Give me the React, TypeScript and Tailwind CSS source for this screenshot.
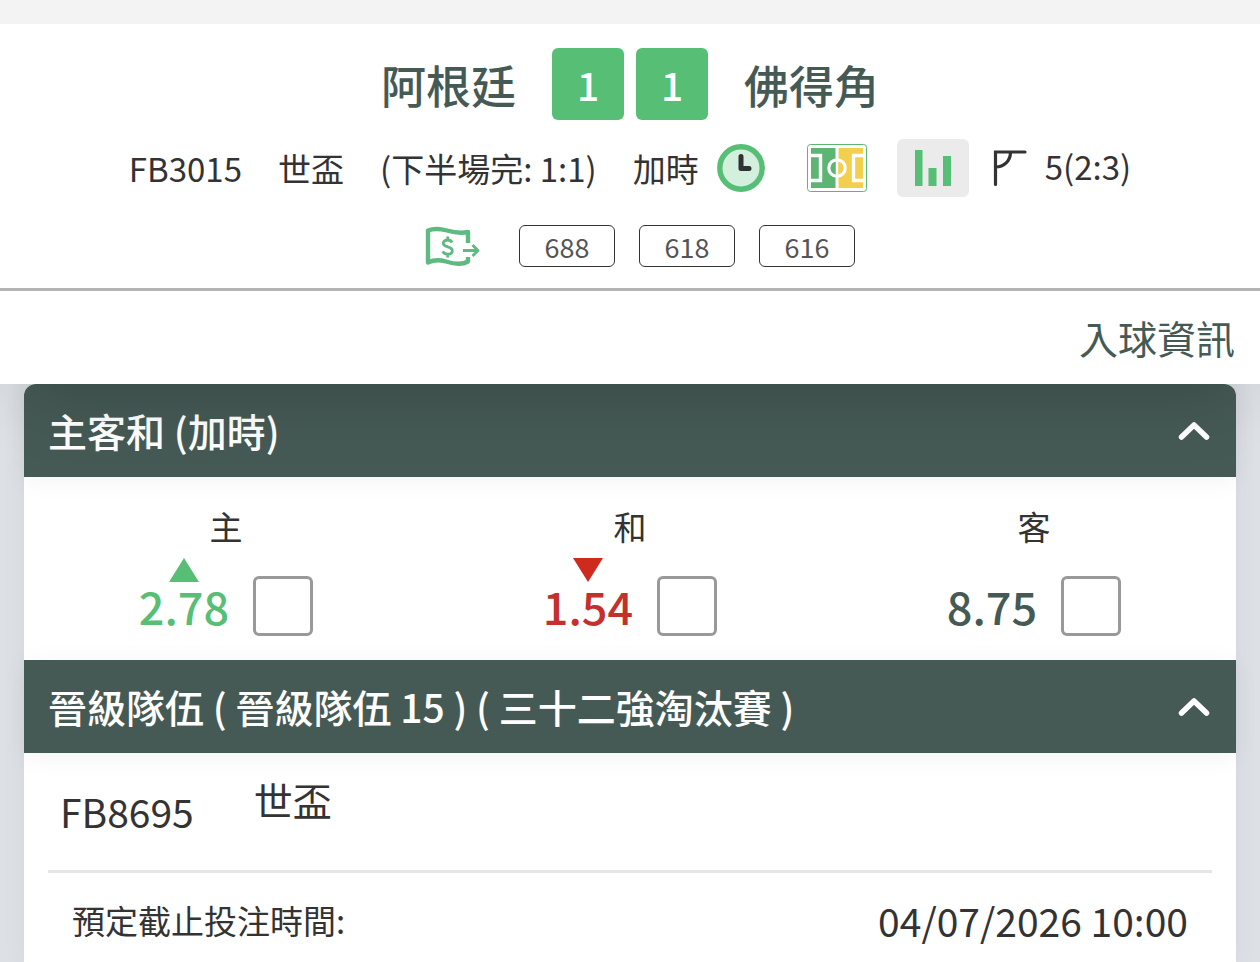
import React, { useState } from 'react';

type Trend = 'up' | 'down' | null;

interface Selection {
  id: string;
  label: string;
  odds: string;
  trend: Trend;
}

const selections: Selection[] = [
  { id: 'home', label: '主', odds: '2.78', trend: 'up' },
  { id: 'draw', label: '和', odds: '1.54', trend: 'down' },
  { id: 'away', label: '客', odds: '8.75', trend: null },
];

const channels = ['688', '618', '616'];

function ClockIcon() {
  return (
    <svg viewBox="0 0 48 48" className="w-12 h-12 shrink-0" aria-hidden="true">
      <circle cx="24" cy="24" r="21.2" fill="#d3efdd" stroke="#57be75" strokeWidth="5.4" />
      <path d="M24 12.5V24.5H32" fill="none" stroke="#2f3432" strokeWidth="5" strokeLinecap="round" strokeLinejoin="round" />
    </svg>
  );
}

function PitchIcon() {
  return (
    <svg viewBox="0 0 60 48" className="w-[60px] h-12" aria-hidden="true">
      <rect x="0.5" y="0.5" width="59" height="47" rx="3" fill="#fff" stroke="#5cb573" />
      <rect x="4" y="4" width="24.5" height="40" fill="#5cb573" />
      <rect x="31.5" y="4" width="24.5" height="40" fill="#f2cf4c" />
      <path d="M4 11.500H13.500V36.500H4M56 11.500H46.500V36.500H56" fill="none" stroke="#fff" strokeWidth="3.4" />
      <path d="M28.500 16.500A8 8 0 0 0 28.500 31.500Z" fill="#5cb573" />
      <path d="M31.500 16.500A8 8 0 0 1 31.500 31.500Z" fill="#f2cf4c" />
      <circle cx="30" cy="24" r="8.2" fill="none" stroke="#fff" strokeWidth="3.2" />
    </svg>
  );
}

function StatsIcon() {
  return (
    <svg viewBox="0 0 36 36" className="w-9 h-9" aria-hidden="true">
      <path d="M0 0H7.500V36H0ZM13.500 18H21.500V36H13.500ZM28 6H36V36H28Z" fill="#57be75" />
    </svg>
  );
}

function CornerIcon() {
  return (
    <svg viewBox="0 0 34 38" className="w-[34px] h-[38px] shrink-0" aria-hidden="true">
      <path d="M2.500 35.500V3H32M2.500 18C11 18 17.500 12 17.500 3" fill="none" stroke="#333" strokeWidth="3.200" strokeLinecap="round" />
    </svg>
  );
}

function CashOutIcon() {
  return (
    <svg viewBox="0 0 56 40" className="w-14 h-10" aria-hidden="true">
      <g fill="none" stroke="#5fb983" strokeLinecap="butt" strokeLinejoin="round">
        <path
          d="M43 17V6C36 7.500 29 6.500 22 4.500C14 2.400 8 2.500 3 4.500V36.500C8 34 14 33.500 21 35.500C29 38 38 38.500 43 35.500V31"
          strokeWidth="4.400"
        />
        <path d="M38 24.500H53M47.500 19L53 24.500L47.500 30" strokeWidth="2.800" />
        <path
          d="M27 16.500C26 14.500 24.500 14 22.700 14C20.100 14 18.300 15.400 18.300 17.300C18.300 19.500 20.300 20.200 22.700 20.900C25.300 21.600 27.300 22.500 27.300 24.800C27.300 26.800 25.500 28.200 22.800 28.200C20.400 28.200 18.600 27.300 17.700 25.400M22.700 10.500V14M22.700 28.200V31.500"
          strokeWidth="2.800"
        />
      </g>
    </svg>
  );
}

function TrendMarker({ trend }: { trend: Trend }) {
  if (!trend) return null;
  return (
    <svg viewBox="0 0 30 24" className="absolute left-1/2 -top-[18px] -translate-x-1/2 w-[30px] h-6" aria-hidden="true">
      {trend === 'up' ? <path d="M15 0L30 24H0Z" fill="#57be75" /> : <path d="M0 0H30L15 24Z" fill="#cf2a1e" />}
    </svg>
  );
}

function SectionHeader({ title, open, onToggle, className = '' }: { title: string; open: boolean; onToggle: () => void; className?: string }) {
  return (
    <h2 className={className}>
      <button
        type="button"
        aria-expanded={open}
        onClick={onToggle}
        className="relative w-full h-[93px] pl-6 pr-[26px] flex items-center justify-between bg-[#465a55] text-white text-[39px] leading-[48px] font-medium text-left rounded-[inherit] shadow-[0_4px_24px_rgba(0,0,0,0.05)]"
      >
        <span className="pb-0.5">{title}</span>
        <svg viewBox="0 0 32 20" className={open ? 'w-8 h-5' : 'w-8 h-5 rotate-180'} aria-hidden="true">
          <path d="M3.500 16L16 4L28.500 16" fill="none" stroke="#fff" strokeWidth="5.500" strokeLinecap="round" strokeLinejoin="round" />
        </svg>
      </button>
    </h2>
  );
}

function MatchHeader() {
  return (
    <header className="relative z-10 bg-white border-t-24 border-[#f3f3f3] shadow-[0_36px_64px_-24px_rgba(0,0,0,0.18)]">
      <div className="pt-6 pb-[21px] border-b-3 border-[#b4b4b4]">
        <div className="flex items-center justify-center gap-9 text-[45px] leading-[60px] font-medium text-[#465a55]">
          <span className="pt-0.5">阿根廷</span>
          <div className="flex gap-3 text-[39px] text-white">
            <span className="w-[72px] h-[72px] rounded-md bg-[#57be75] flex items-center justify-center">1</span>
            <span className="w-[72px] h-[72px] rounded-md bg-[#57be75] flex items-center justify-center">1</span>
          </div>
          <span className="pt-0.5">佛得角</span>
        </div>

        <div className="mt-[19px] flex items-center justify-center text-[33px] leading-[48px] whitespace-nowrap">
          <div className="flex gap-9">
            <span>FB3015</span>
            <span>世盃</span>
            <span>(下半場完: 1:1)</span>
            <span>加時</span>
          </div>
          <div className="ml-[18px] flex items-center">
            <ClockIcon />
            <button type="button" aria-label="球場" className="ml-[42px]">
              <PitchIcon />
            </button>
            <button type="button" aria-label="統計" className="ml-[30px] w-[72px] h-[58px] rounded-md bg-[#ebebeb] flex items-center justify-center">
              <StatsIcon />
            </button>
          </div>
          <div className="ml-6 flex items-center gap-[18px]">
            <CornerIcon />
            <span className="pb-1">5(2:3)</span>
          </div>
        </div>

        <div className="mt-7 flex items-center justify-center">
          <button type="button" aria-label="派彩" className="px-5 mr-[18px]">
            <CashOutIcon />
          </button>
          <div className="flex gap-6">
            {channels.map((channel) => (
              <button
                key={channel}
                type="button"
                className="w-24 h-[42px] rounded-md border border-[#333] bg-white text-[27px] leading-[39px] text-[#555]"
              >
                {channel}
              </button>
            ))}
          </div>
        </div>
      </div>

      <div className="h-[93px] px-[25px] pb-0.5 flex items-center justify-end">
        <a href="#goals" className="text-[39px] leading-[48px] text-[#465a55]">入球資訊</a>
      </div>
    </header>
  );
}

export default function App() {
  const [open, setOpen] = useState({ had: true, advance: true });

  return (
    <div className="min-h-screen bg-[#dde1e6] text-[#333] font-['Noto_Sans_CJK_TC',sans-serif]">
      <MatchHeader />

      <main className="mx-6 bg-white rounded-t-xl shadow-[0_0_24px_rgba(60,70,100,0.06)]">
        <section>
          <SectionHeader
            title="主客和 (加時)"
            open={open.had}
            onToggle={() => setOpen({ ...open, had: !open.had })}
            className="rounded-t-xl"
          />
          {open.had && (
            <div className="grid grid-cols-3 py-6">
              {selections.map((item) => (
                <div key={item.id} className="flex flex-col items-center">
                  <label htmlFor={item.id} className="text-[33px] leading-[50px]">{item.label}</label>
                  <div className="mt-[25px] flex items-center gap-6">
                    <div
                      className={
                        item.trend === 'up'
                          ? 'relative text-[45px] leading-[60px] font-medium text-[#57be75]'
                          : item.trend === 'down'
                            ? 'relative text-[45px] leading-[60px] font-medium text-[#c4302b]'
                            : 'relative text-[45px] leading-[60px] font-medium text-[#465a55]'
                      }
                    >
                      <TrendMarker trend={item.trend} />
                      {item.odds}
                    </div>
                    <input
                      id={item.id}
                      type="checkbox"
                      className="appearance-none w-[60px] h-[60px] rounded-md border-3 border-[#999] bg-white checked:bg-[#57be75]"
                    />
                  </div>
                </div>
              ))}
            </div>
          )}
        </section>

        <section>
          <SectionHeader
            title="晉級隊伍 ( 晉級隊伍 15 ) ( 三十二強淘汰賽 )"
            open={open.advance}
            onToggle={() => setOpen({ ...open, advance: !open.advance })}
          />
          {open.advance && (
            <div className="px-6">
              <div className="h-[120px] px-3 flex gap-[60px] border-b-3 border-[#e6e6e6] text-[39px] leading-[48px]">
                <span className="pt-[34px]">FB8695</span>
                <span className="pt-[22px]">世盃</span>
              </div>
              <div className="h-[93px] px-6 flex items-center justify-between">
                <span className="text-[33px] leading-[48px]">預定截止投注時間:</span>
                <span className="text-[39px] leading-[48px]">04/07/2026 10:00</span>
              </div>
            </div>
          )}
        </section>
      </main>
    </div>
  );
}
